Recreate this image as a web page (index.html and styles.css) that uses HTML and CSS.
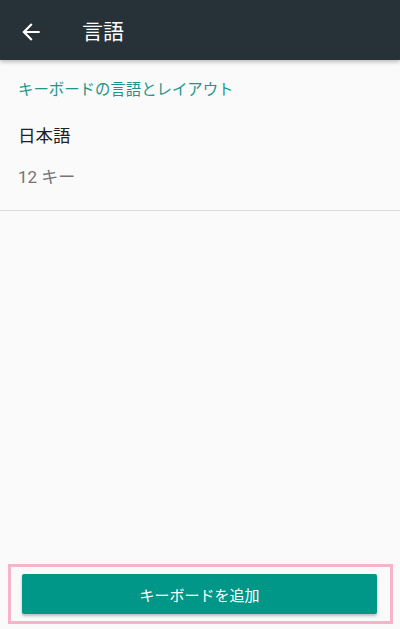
FILE: index.html
```html
<!DOCTYPE html>
<html lang="ja">
<head>
<meta charset="utf-8">
<title>言語</title>
<link rel="stylesheet" href="styles.css">
</head>
<body>
<div class="app">
  <header class="toolbar">
    <span class="back">
      <svg viewBox="0 0 24 24" width="26" height="26"><path fill="#ffffff" d="M20 11H7.83l5.59-5.59L12 4l-8 8 8 8 1.41-1.41L7.83 13H20v-2z"/></svg>
    </span>
    <h1 class="title">言語</h1>
  </header>
  <main class="content">
    <div class="section-title">キーボードの言語とレイアウト</div>
    <div class="item">
      <div class="item-title">日本語</div>
      <div class="item-sub">12 キー</div>
    </div>
  </main>
  <footer class="footer">
    <button class="add-btn">キーボードを追加</button>
  </footer>
</div>
</body>
</html>
```

FILE: styles.css
```css
html, body {
  margin: 0;
  padding: 0;
  background: #fafafa;
}
body {
  font-family: Roboto, "Noto Sans CJK JP", sans-serif;
}
.app {
  display: flex;
  flex-direction: column;
  height: 629px;
  width: 400px;
}
.toolbar {
  height: 60px;
  flex: 0 0 60px;
  background: #263238;
  display: flex;
  align-items: center;
  box-shadow: 0 2px 4px rgba(0,0,0,0.25);
  position: relative;
  z-index: 1;
}
.back {
  display: flex;
  width: 26px;
  height: 26px;
  margin-left: 18px;
  margin-top: 4px;
}
.title {
  margin: 4px 0 0 38px;
  font-size: 21px;
  font-weight: 400;
  color: #ffffff;
  line-height: 28px;
}
.content {
  flex: 1;
}
.section-title {
  padding: 20px 18px 0 18px;
  font-size: 15.4px;
  line-height: 20px;
  color: #1b9688;
}
.item {
  padding: 24px 18px 22px 18px;
  border-bottom: 1px solid #dcdcdc;
}
.item-title {
  font-size: 17.5px;
  line-height: 24px;
  color: #212121;
}
.item-sub {
  margin-top: 18px;
  font-size: 17px;
  line-height: 22px;
  color: #757575;
}
.footer {
  margin: 0 7px 5px 8px;
  border: 3px solid #f7b3cc;
  padding: 7px 13px 7px 11px;
}
.add-btn {
  display: block;
  width: 100%;
  height: 40px;
  border: none;
  border-radius: 2px;
  background: #009688;
  color: #ffffff;
  font-family: Roboto, "Noto Sans CJK JP", sans-serif;
  font-size: 15px;
  box-shadow: 0 2px 3px rgba(0,0,0,0.25);
  padding: 0;
}
```
